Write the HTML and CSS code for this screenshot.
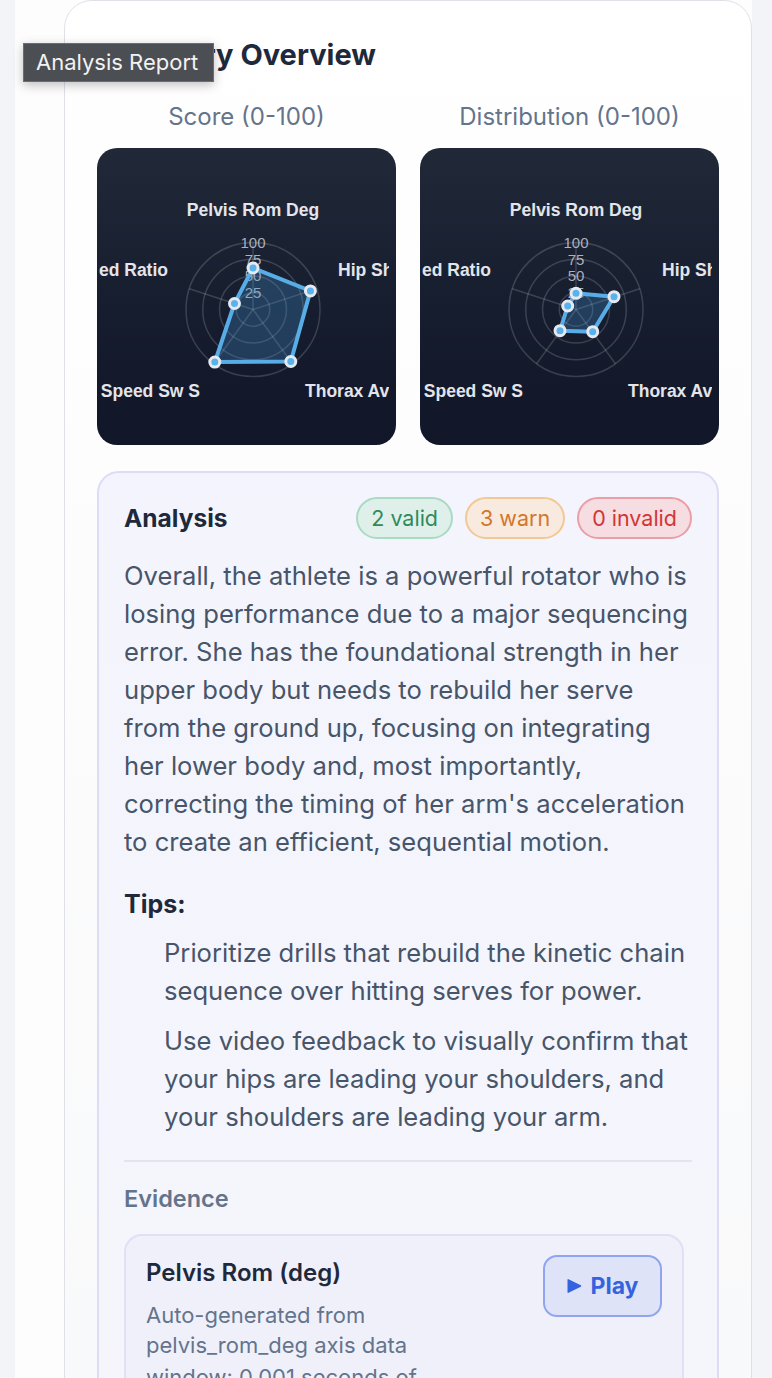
FILE: index.html
```html
<!DOCTYPE html>
<html lang="en">
<head>
<meta charset="utf-8">
<title>Summary Overview</title>
<link rel="stylesheet" href="styles.css">
</head>
<body>
<div class="page">
  <section class="card">
    <h2 class="card-title">Summary Overview</h2>
    <div class="charts">
      <div class="chart-col">
        <div class="chart-title">Score (0-100)</div>
        <div class="chart-box">
          <svg class="radar" viewBox="0 0 299 297" width="299" height="297">
            <defs>
              <clipPath id="clipA"><rect x="2" y="0" width="290" height="297"/></clipPath>
            </defs>
            <g class="grid">
              <circle cx="156" cy="161.5" r="16.75"/>
              <circle cx="156" cy="161.5" r="33.5"/>
              <circle cx="156" cy="161.5" r="50.25"/>
              <circle cx="156" cy="161.5" r="67"/>
              <line x1="156" y1="161.5" x2="156" y2="94.5"/>
              <line x1="156" y1="161.5" x2="219.7" y2="140.8"/>
              <line x1="156" y1="161.5" x2="195.4" y2="215.7"/>
              <line x1="156" y1="161.5" x2="116.6" y2="215.7"/>
              <line x1="156" y1="161.5" x2="92.3" y2="140.8"/>
            </g>
            <g class="ticks">
              <text x="156" y="100">100</text>
              <text x="156" y="116.5">75</text>
              <text x="156" y="133">50</text>
              <text x="156" y="150">25</text>
            </g>
            <polygon class="area" points="156,120 213.4,142.9 193.8,213.5 117.8,214.1 137.5,155.5"/>
            <g class="pts">
              <circle cx="156" cy="120" r="5"/>
              <circle cx="213.4" cy="142.9" r="5"/>
              <circle cx="193.8" cy="213.5" r="5"/>
              <circle cx="117.8" cy="214.1" r="5"/>
              <circle cx="137.5" cy="155.5" r="5"/>
            </g>
            <g class="labels" clip-path="url(#clipA)">
              <text class="mid" x="156" y="68">Pelvis Rom Deg</text>
              <text x="241" y="128">Hip Shoulder</text>
              <text x="208" y="249">Thorax Avg</text>
              <text class="end" x="103" y="249">Speed Sw S</text>
              <text class="end" x="71" y="128">Speed Ratio</text>
            </g>
          </svg>
        </div>
      </div>
      <div class="chart-col">
        <div class="chart-title">Distribution (0-100)</div>
        <div class="chart-box">
          <svg class="radar" viewBox="0 0 299 297" width="299" height="297">
            <defs>
              <clipPath id="clipB"><rect x="2" y="0" width="290" height="297"/></clipPath>
            </defs>
            <g class="grid">
              <circle cx="156" cy="161.5" r="16.75"/>
              <circle cx="156" cy="161.5" r="33.5"/>
              <circle cx="156" cy="161.5" r="50.25"/>
              <circle cx="156" cy="161.5" r="67"/>
              <line x1="156" y1="161.5" x2="156" y2="94.5"/>
              <line x1="156" y1="161.5" x2="219.7" y2="140.8"/>
              <line x1="156" y1="161.5" x2="195.4" y2="215.7"/>
              <line x1="156" y1="161.5" x2="116.6" y2="215.7"/>
              <line x1="156" y1="161.5" x2="92.3" y2="140.8"/>
            </g>
            <g class="ticks">
              <text x="156" y="100">100</text>
              <text x="156" y="116.5">75</text>
              <text x="156" y="133">50</text>
              <text x="156" y="150">25</text>
            </g>
            <polygon class="area" points="156,145.3 194,148.7 172.7,183.7 140,182.7 147.7,158"/>
            <g class="pts">
              <circle cx="156" cy="145.3" r="5"/>
              <circle cx="194" cy="148.7" r="5"/>
              <circle cx="172.7" cy="183.7" r="5"/>
              <circle cx="140" cy="182.7" r="5"/>
              <circle cx="147.7" cy="158" r="5"/>
            </g>
            <g class="labels" clip-path="url(#clipB)">
              <text class="mid" x="156" y="68">Pelvis Rom Deg</text>
              <text x="242" y="128">Hip Shoulder</text>
              <text x="208" y="249">Thorax Avg</text>
              <text class="end" x="103" y="249">Speed Sw S</text>
              <text class="end" x="71" y="128">Speed Ratio</text>
            </g>
          </svg>
        </div>
      </div>
    </div>

    <div class="analysis">
      <div class="analysis-head">
        <h3 class="analysis-title">Analysis</h3>
        <div class="badges">
          <span class="badge valid">2 valid</span>
          <span class="badge warn">3 warn</span>
          <span class="badge invalid">0 invalid</span>
        </div>
      </div>
      <p class="summary">Overall, the athlete is a powerful rotator who is losing performance due to a major sequencing error. She has the foundational strength in her upper body but needs to rebuild her serve from the ground up, focusing on integrating her lower body and, most importantly, correcting the timing of her arm's acceleration to create an efficient, sequential motion.</p>
      <h4 class="tips-title">Tips:</h4>
      <ul class="tips">
        <li>Prioritize drills that rebuild the kinetic chain sequence over hitting serves for power.</li>
        <li>Use video feedback to visually confirm that your hips are leading your shoulders, and your shoulders are leading your arm.</li>
      </ul>
      <hr class="divider">
      <h4 class="evidence-title">Evidence</h4>
      <div class="evidence-card">
        <div class="evidence-text">
          <div class="evidence-name">Pelvis Rom (deg)</div>
          <div class="evidence-desc">Auto-generated from pelvis_rom_deg axis data</div>
          <div class="evidence-desc">window: 0.001 seconds of</div>
        </div>
        <button class="play" type="button">
          <svg class="play-icon" viewBox="0 0 15 16" width="15" height="16"><path d="M1.5 1.2 L13.8 7.2 Q14.8 8 13.8 8.8 L1.5 14.8 Q0.5 15.2 0.5 14 L0.5 2 Q0.5 0.8 1.5 1.2 Z"/></svg>
          <span>Play</span>
        </button>
      </div>
    </div>
  </section>
</div>
<div class="tooltip">Analysis Report</div>
</body>
</html>
```

FILE: styles.css
```css
* { box-sizing: border-box; }

html, body {
  margin: 0;
  padding: 0;
}

body {
  background: #f3f4f7;
  font-family: Inter, "Noto Sans", "Liberation Sans", sans-serif;
  height: 1378px;
  overflow: hidden;
}

.page {
  margin-left: 15px;
  width: 737px;
  min-height: 1378px;
  padding-left: 49px;
  background: #fdfdfe;
}

.card {
  width: 688px;
  min-height: 1400px;
  background: linear-gradient(180deg, #ffffff 0%, #fbfbfc 60%, #f8f9fa 100%);
  border: 1px solid #dfe1e7;
  border-radius: 28px;
  padding: 37px 32px 0 32px;
}

.card-title {
  margin: 0 0 31px 0;
  font-size: 29px;
  line-height: 34px;
  font-weight: 700;
  color: #1e293b;
}

.charts {
  display: grid;
  grid-template-columns: 299px 299px;
  gap: 24px;
}

.chart-title {
  text-align: center;
  font-size: 24px;
  line-height: 28px;
  color: #64748b;
  margin-bottom: 17px;
}

.chart-box {
  height: 297px;
  border-radius: 20px;
  overflow: hidden;
  background: linear-gradient(180deg, #212939 0%, #161d2e 55%, #111628 100%);
}

.radar {
  display: block;
}

.grid circle,
.grid line {
  fill: none;
  stroke: rgba(255, 255, 255, 0.16);
  stroke-width: 1.5;
}

.ticks text {
  font-family: "Liberation Sans", Arial, sans-serif;
  font-size: 15px;
  fill: rgba(214, 218, 226, 0.78);
  text-anchor: middle;
}

.area {
  fill: rgba(70, 150, 215, 0.28);
  stroke: #58ade6;
  stroke-width: 4;
  stroke-linejoin: round;
}

.pts circle {
  fill: #5ab2ec;
  stroke: #e6e9ef;
  stroke-width: 3;
}

.labels text {
  font-family: "Liberation Sans", Arial, sans-serif;
  font-size: 17.5px;
  font-weight: 700;
  fill: #e3e5ea;
}

.labels text.mid { text-anchor: middle; }
.labels text.end { text-anchor: end; }

.analysis {
  margin-top: 26px;
  border: 2px solid #dcdcf7;
  border-radius: 22px;
  background: linear-gradient(180deg, #f4f4fe 0%, #f5f5fb 100%);
  padding: 24px 25px 40px 25px;
  min-height: 960px;
}

.analysis-head {
  display: flex;
  align-items: center;
  justify-content: space-between;
  height: 42px;
}

.analysis-title {
  margin: 0;
  font-size: 24.5px;
  font-weight: 700;
  color: #1e293b;
}

.badges {
  display: flex;
  gap: 12px;
}

.badge {
  display: inline-flex;
  align-items: center;
  height: 42px;
  padding: 0 13px;
  border-radius: 21px;
  border: 2px solid;
  font-size: 21.5px;
}

.badge.valid {
  background: #dff0ea;
  border-color: #a9dbc3;
  color: #2f8a5c;
}

.badge.warn {
  background: #f8eadf;
  border-color: #f2c894;
  color: #d2772a;
}

.badge.invalid {
  background: #f6dde2;
  border-color: #ec9ea6;
  color: #d23535;
}

.summary {
  margin: 18px 0 0 0;
  font-size: 25.6px;
  line-height: 38px;
  color: #475569;
}

.tips-title {
  margin: 24px 0 0 0;
  font-size: 25px;
  line-height: 38px;
  font-weight: 700;
  color: #1e293b;
}

.tips {
  list-style: none;
  margin: 11px 0 0 0;
  padding: 0 0 0 40px;
}

.tips li {
  font-size: 25.6px;
  line-height: 38px;
  color: #475569;
}

.tips li + li {
  margin-top: 12px;
}

.divider {
  margin: 24px 0 0 0;
  border: 0;
  border-top: 2px solid #e3e4ec;
}

.evidence-title {
  margin: 22px 0 0 0;
  font-size: 23.5px;
  line-height: 30px;
  font-weight: 600;
  color: #64748b;
}

.evidence-card {
  margin: 20px 8px 0 0;
  border: 2px solid #dfdff6;
  border-radius: 18px;
  background: #f0f0fb;
  padding: 19px 20px 20px 20px;
  display: flex;
  justify-content: space-between;
  align-items: flex-start;
  gap: 24px;
}

.evidence-text {
  max-width: 320px;
  padding-top: 3px;
}

.evidence-name {
  font-size: 24px;
  line-height: 30px;
  font-weight: 600;
  color: #1e293b;
  margin-bottom: 12px;
}

.evidence-desc {
  font-size: 22px;
  line-height: 30px;
  color: #64748b;
}

.evidence-desc + .evidence-desc {
  margin-top: 2px;
}

.play {
  width: 119px;
  height: 62px;
  border: 2px solid #8fa5ef;
  border-radius: 14px;
  background: #dfe3f8;
  color: #3563df;
  font-family: Inter, "Noto Sans", "Liberation Sans", sans-serif;
  font-size: 23px;
  font-weight: 700;
  display: inline-flex;
  align-items: center;
  justify-content: center;
  gap: 9px;
  padding: 0;
}

.play-icon {
  display: block;
  flex: 0 0 auto;
  width: 15px;
  height: 16px;
  fill: #3563df;
}

.tooltip {
  position: absolute;
  left: 23px;
  top: 43px;
  width: 191px;
  height: 39px;
  background: #4b4e52;
  border: 1px solid #6a6d71;
  color: #f2f2f2;
  font-family: Inter, "Noto Sans", "Liberation Sans", sans-serif;
  font-size: 22px;
  line-height: 37px;
  padding-left: 12px;
  box-shadow: 0 3px 10px rgba(0, 0, 0, 0.25);
  white-space: nowrap;
}
```
